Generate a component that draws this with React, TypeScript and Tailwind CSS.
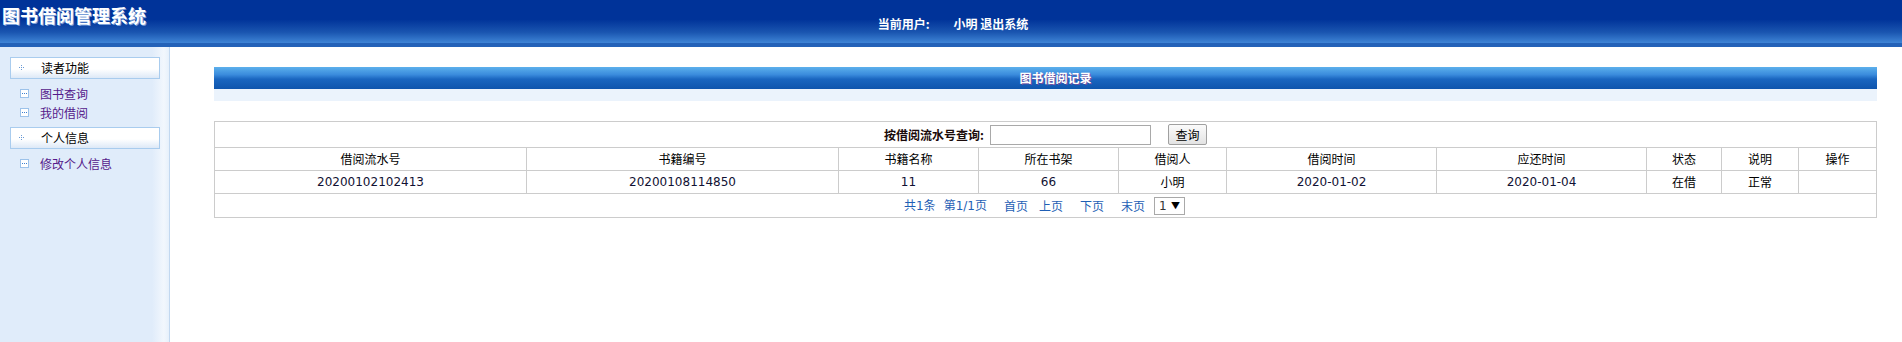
const cjk = "font-['SimSun','Noto_Sans_CJK_SC',sans-serif]";

const columns = [
  { title: "借阅流水号", width: 312, value: "20200102102413" },
  { title: "书籍编号", width: 312, value: "20200108114850" },
  { title: "书籍名称", width: 140, value: "11" },
  { title: "所在书架", width: 140, value: "66" },
  { title: "借阅人", width: 108, value: "小明" },
  { title: "借阅时间", width: 210, value: "2020-01-02" },
  { title: "应还时间", width: 210, value: "2020-01-04" },
  { title: "状态", width: 75, value: "在借" },
  { title: "说明", width: 77, value: "正常" },
  { title: "操作", width: 78, value: "" },
];

const menus = [
  { title: "读者功能", items: ["图书查询", "我的借阅"] },
  { title: "个人信息", items: ["修改个人信息"] },
];

function DotCross() {
  return (
    <svg width="6" height="6" viewBox="0 0 6 6" className="ml-[8px] mr-[16px]">
      <rect x="2" y="0" width="1" height="1" fill="#6b9bd6" />
      <rect x="0" y="2" width="1" height="1" fill="#6b9bd6" />
      <rect x="2" y="2" width="1" height="1" fill="#6b9bd6" />
      <rect x="4" y="2" width="1" height="1" fill="#6b9bd6" />
      <rect x="2" y="4" width="1" height="1" fill="#6b9bd6" />
    </svg>
  );
}

function ItemIcon() {
  return (
    <span className="mr-[11px] flex h-[9px] w-[9px] items-center justify-center gap-px border border-[#9cc2ea] bg-white">
      <span className="h-px w-px bg-[#3b7fd0]" />
      <span className="h-px w-px bg-[#3b7fd0]" />
      <span className="h-px w-px bg-[#3b7fd0]" />
    </span>
  );
}

function isNumeric(v: string) {
  return /^[0-9-]+$/.test(v);
}

export default function App() {
  return (
    <div className={`h-[342px] w-[1902px] overflow-hidden bg-white text-[12px] text-black ${cjk}`}>
      {/* header */}
      <div className="relative h-[43px] bg-[linear-gradient(to_bottom,#003399_0%,#003399_45%,#1a55b0_75%,#3f85d6_100%)]">
        <div className="absolute left-[2px] top-[4px] text-[18px] font-bold leading-[22px] text-white [text-shadow:1px_1px_0_#7a9fd8]">
          图书借阅管理系统
        </div>
        <div className="flex h-full items-end justify-center pb-[12px] pl-[4px] text-[12px] font-bold leading-[14px] text-white">
          <span>当前用户:</span>
          <span className="ml-[24px]">小明 退出系统</span>
        </div>
      </div>
      <div className="h-[4px] bg-[#2462b8]" />

      <div className="flex h-[295px]">
        {/* sidebar */}
        <div className="h-full w-[170px] shrink-0 border-r border-[#c2d8f0] bg-[linear-gradient(to_right,#e0ecfa_0%,#e0ecfa_90%,#f2f7fd_97%,#e6f0fb_100%)] pt-[10px]">
          {menus.map((menu) => (
            <div key={menu.title} className="mb-[5px]">
              <div className="mx-[10px] flex h-[22px] w-[150px] items-center border border-[#a9ccee] bg-[linear-gradient(to_bottom,#ffffff_0%,#ffffff_55%,#dde9f7_100%)]">
                <DotCross />
                <span className="leading-[14px]">{menu.title}</span>
              </div>
              <div className="pt-[5px]">
                {menu.items.map((item) => (
                  <div key={item} className="flex h-[19px] items-center pl-[20px] text-[#551a8b]">
                    <ItemIcon />
                    <span className="leading-[14px]">{item}</span>
                  </div>
                ))}
              </div>
            </div>
          ))}
        </div>

        {/* content */}
        <div className="flex-1 pl-[44px] pr-[26px] pt-[20px]">
          <div className="flex h-[22px] items-center justify-center bg-[linear-gradient(to_bottom,#5cb0ec_0%,#3a8bdc_35%,#1a66c0_55%,#0f55ad_100%)] pl-[20px] text-[12px] font-bold text-white [text-shadow:1px_1px_0_#6a4fa0]">
            图书借阅记录
          </div>
          <div className="h-[12px] bg-[#ebf3fc]" />

          <table className="mt-[20px] w-[1662px] table-fixed border-collapse border border-[#cccccc]">
            <colgroup>
              {columns.map((c) => (
                <col key={c.title} style={{ width: c.width }} />
              ))}
            </colgroup>
            <tbody>
              <tr className="h-[26px]">
                <td colSpan={10} className="border border-[#cccccc] p-0">
                  <div className="flex items-center justify-center">
                    <span className="font-bold text-[#1a0a0a]">按借阅流水号查询:</span>
                    <input className="ml-[6px] h-[20px] w-[161px] border border-[#a9a9a9] bg-white px-1 outline-none" />
                    <button className="ml-[17px] h-[21px] w-[39px] rounded-[2px] border border-[#a0a0a0] bg-[linear-gradient(to_bottom,#fbfbfb,#e3e3e3)] text-[12px] leading-[18px]">
                      查询
                    </button>
                  </div>
                </td>
              </tr>
              <tr className="h-[23px]">
                {columns.map((c) => (
                  <td key={c.title} className="border border-[#cccccc] p-0 text-center leading-[14px]">
                    {c.title}
                  </td>
                ))}
              </tr>
              <tr className="h-[23px]">
                {columns.map((c) => (
                  <td
                    key={c.title}
                    className={`border border-[#cccccc] p-0 text-center leading-[14px] ${
                      isNumeric(c.value) ? "font-['DejaVu_Sans',sans-serif] text-[#111133]" : ""
                    }`}
                  >
                    {c.value}
                  </td>
                ))}
              </tr>
              <tr className="h-[24px]">
                <td colSpan={10} className="border border-[#cccccc] p-0">
                  <div className="flex items-center justify-center pr-[2px] text-[#1f5fb5]">
                    <span>
                      共<span className="font-['DejaVu_Sans',sans-serif]">1</span>条
                    </span>
                    <span className="ml-[8px]">
                      第<span className="font-['DejaVu_Sans',sans-serif]">1/1</span>页
                    </span>
                    <span className="ml-[17px]">首页</span>
                    <span className="ml-[11px]">上页</span>
                    <span className="ml-[17px]">下页</span>
                    <span className="ml-[17px]">末页</span>
                    <span className="ml-[9px] flex h-[18px] w-[31px] items-center justify-between border border-[#a9a9a9] bg-white pl-[4px] pr-[4px] text-black">
                      <span className="font-['DejaVu_Sans',sans-serif] text-[#333]">1</span>
                      <span className="text-[9px]">▼</span>
                    </span>
                  </div>
                </td>
              </tr>
            </tbody>
          </table>
        </div>
      </div>
    </div>
  );
}
